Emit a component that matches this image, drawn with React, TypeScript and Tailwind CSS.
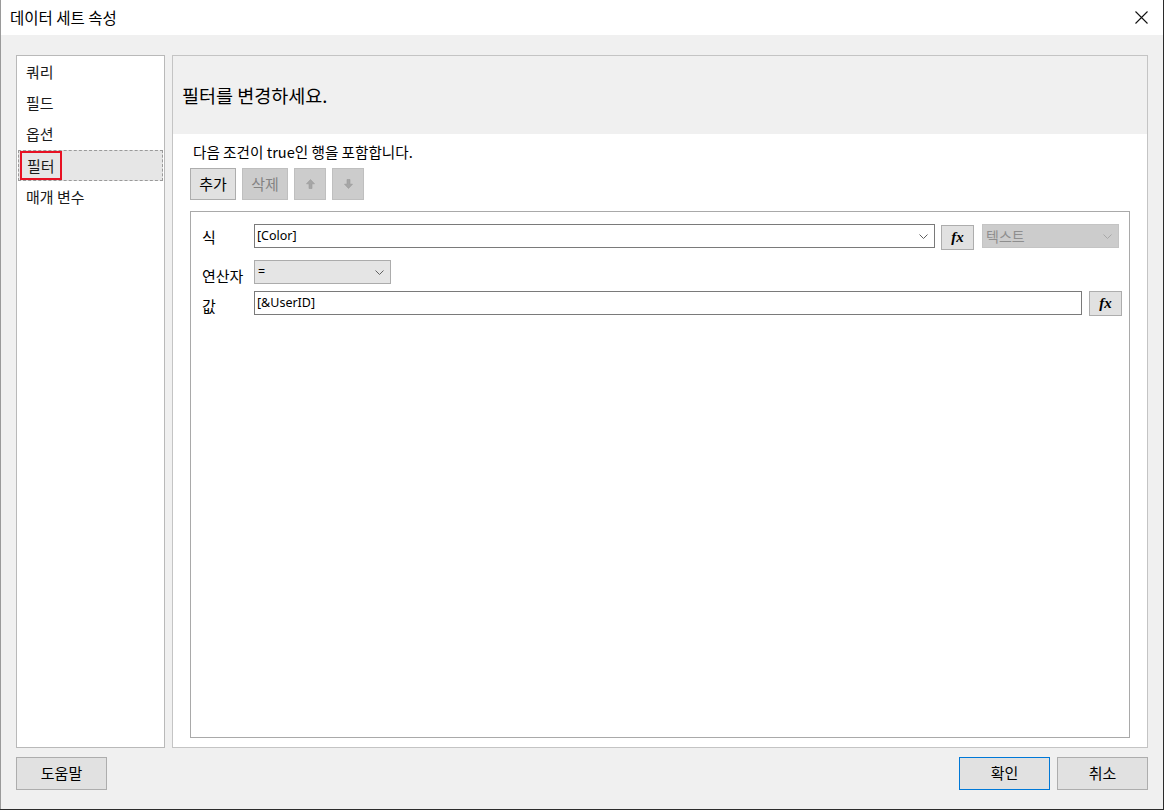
import React from "react";

const Chevron = ({ color = "#606060" }: { color?: string }) => (
  <svg width="9" height="5" viewBox="0 0 9 5" className="shrink-0">
    <path d="M0.5 0.5 L4.5 4.5 L8.5 0.5" fill="none" stroke={color} strokeWidth="1" />
  </svg>
);

const Arrow = ({ down = false }: { down?: boolean }) => (
  <svg width="9" height="10" viewBox="0 0 9 10" style={{ transform: down ? "rotate(180deg)" : undefined }}>
    <path d="M4.5 0.5 L8.5 4.8 L6 4.8 L6 9.5 L3 9.5 L3 4.8 L0.5 4.8 Z" fill="#a6a6a6" stroke="#9a9a9a" strokeWidth="0.6" />
  </svg>
);

const Fx = () => (
  <div className="w-[33px] h-[25px] bg-[#e1e1e1] border border-[#adadad] flex items-center justify-center">
    <span
      className="italic font-bold text-[15px] leading-none text-black"
      style={{ fontFamily: '"Liberation Serif", "DejaVu Serif", serif' }}
    >
      fx
    </span>
  </div>
);

const latin = { fontFamily: '"Noto Sans", "Noto Sans CJK KR", sans-serif' };

export default function App() {
  const navItems = ["쿼리", "필드", "옵션", "필터", "매개 변수"];
  return (
    <div
      className="w-[1164px] h-[810px] bg-[#2b2b2b] overflow-hidden text-black"
      style={{ fontFamily: '"Noto Sans CJK KR", sans-serif' }}
    >
      <div className="w-[1163px] h-[809px] bg-[#f0f0f0] flex flex-col border-l border-[#9a9a9a]">
        {/* title bar */}
        <div className="h-[35px] bg-white flex items-center justify-between pl-[9px] pr-[15px] shrink-0">
          <span className="text-[15.5px] leading-none">데이터 세트 속성</span>
          <svg width="13" height="13" viewBox="0 0 13 13">
            <path d="M0.5 0.5 L12.5 12.5 M12.5 0.5 L0.5 12.5" stroke="#111" strokeWidth="1.1" />
          </svg>
        </div>

        {/* body */}
        <div className="flex gap-[7px] pl-[15px] pt-[20px] shrink-0">
          {/* nav */}
          <div className="w-[149px] h-[693px] bg-white border border-[#b9b9b9] px-[1px] flex flex-col">
            {navItems.map((n) => {
              const sel = n === "필터";
              return (
                <div
                  key={n}
                  className={
                    "h-[31px] flex items-center text-[15px] leading-none text-[#1a1a1a] " +
                    (sel ? "bg-[#e6e6e6] border border-dashed border-[#9a9a9a] pl-[1px] mt-[1px]" : "pl-[8px]")
                  }
                >
                  {sel ? (
                    <span className="border-2 border-[#e81123] h-[29px] flex items-center px-[5px]">{n}</span>
                  ) : (
                    n
                  )}
                </div>
              );
            })}
          </div>

          {/* main panel */}
          <div className="w-[976px] h-[693px] bg-white border border-[#c4c4c4] flex flex-col">
            <div className="h-[78px] bg-[#f0f0f0] flex items-center pl-[9px] shrink-0">
              <span className="text-[18.5px] leading-none">필터를 변경하세요.</span>
            </div>
            <div className="pl-[17px] pr-[16px] flex flex-col">
              <div className="h-[34px] flex items-center text-[14.6px] leading-none pl-[3px] pt-[2px]">
                다음 조건이 true인 행을 포함합니다.
              </div>
              <div className="flex gap-[6px]">
                <div className="w-[46px] h-[32px] bg-[#e1e1e1] border border-[#adadad] flex items-center justify-center text-[15px]">
                  추가
                </div>
                <div className="w-[46px] h-[32px] bg-[#cccccc] border border-[#bfbfbf] flex items-center justify-center text-[15px] text-[#838383]">
                  삭제
                </div>
                <div className="w-[32px] h-[32px] bg-[#cccccc] border border-[#bfbfbf] flex items-center justify-center">
                  <Arrow />
                </div>
                <div className="w-[32px] h-[32px] bg-[#cccccc] border border-[#bfbfbf] flex items-center justify-center">
                  <Arrow down />
                </div>
              </div>

              <div className="mt-[11px] w-[940px] h-[527px] border border-[#a9a9a9] pt-[12px] pl-[11px] flex flex-col">
                {/* row 1 */}
                <div className="flex items-start">
                  <div className="w-[52px] pt-[5px] text-[15px] leading-none">식</div>
                  <div className="w-[681px] h-[24px] border border-[#7a7a7a] bg-white flex items-center justify-between pl-[2px] pr-[6px]">
                    <span className="text-[12.5px] leading-none" style={latin}>
                      [Color]
                    </span>
                    <Chevron />
                  </div>
                  <div className="ml-[6px] mt-[1px]">
                    <Fx />
                  </div>
                  <div className="ml-[8px] w-[137px] h-[24px] bg-[#cccccc] border border-[#c4c4c4] flex items-center justify-between pl-[3px] pr-[6px]">
                    <span className="text-[14px] leading-none text-[#8e8e8e]">텍스트</span>
                    <Chevron color="#a8a8a8" />
                  </div>
                </div>
                {/* row 2 */}
                <div className="flex items-start mt-[10px]">
                  <div className="w-[52px] text-[15px] leading-none pt-[8px]">연산자</div>
                  <div className="w-[137px] h-[24px] bg-[#e5e5e5] border border-[#acacac] flex items-center justify-between pl-[3px] pr-[6px]">
                    <span className="text-[12.5px] leading-none" style={latin}>
                      =
                    </span>
                    <Chevron />
                  </div>
                </div>
                {/* row 3 */}
                <div className="flex items-start mt-[7px]">
                  <div className="w-[52px] pt-[7px] text-[15px] leading-none">값</div>
                  <div className="w-[828px] h-[24px] border border-[#7a7a7a] bg-white flex items-center pl-[2px]">
                    <span className="text-[12.5px] leading-none" style={latin}>
                      [&amp;UserID]
                    </span>
                  </div>
                  <div className="ml-[7px]">
                    <Fx />
                  </div>
                </div>
              </div>
            </div>
          </div>
        </div>

        {/* footer */}
        <div className="flex justify-between pl-[15px] pr-[15px] pt-[9px]">
          <div className="w-[91px] h-[33px] bg-[#e1e1e1] border border-[#adadad] flex items-center justify-center text-[15px]">
            도움말
          </div>
          <div className="flex gap-[7px]">
            <div className="w-[91px] h-[33px] bg-[#e1e1e1] border border-[#0078d7] flex items-center justify-center text-[15px]">
              확인
            </div>
            <div className="w-[91px] h-[33px] bg-[#e1e1e1] border border-[#adadad] flex items-center justify-center text-[15px]">
              취소
            </div>
          </div>
        </div>
      </div>
    </div>
  );
}
